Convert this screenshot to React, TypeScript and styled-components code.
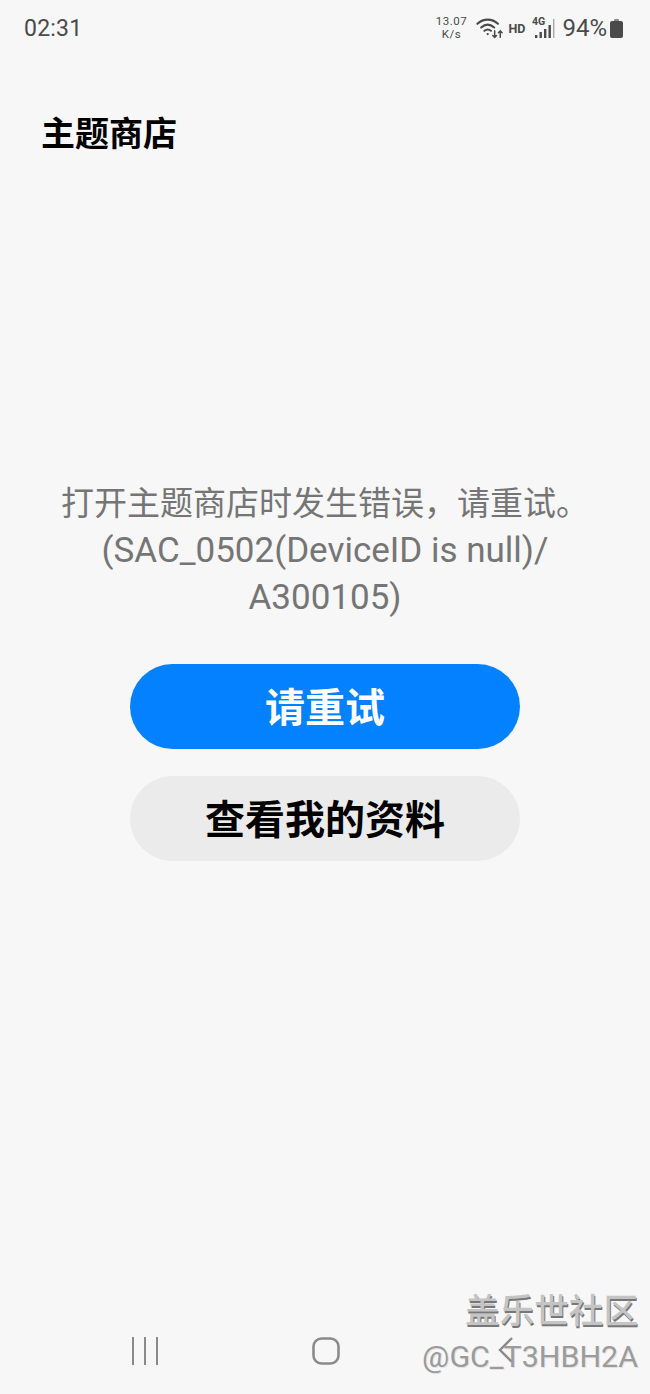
import React from 'react'
import styled, { createGlobalStyle } from 'styled-components'

const FONT = `Roboto, "Noto Sans CJK SC", sans-serif`

const GlobalStyle = createGlobalStyle`
	html, body {
		margin: 0;
		padding: 0;
		background: #f7f7f7;
	}
	body {
		font-family: ${FONT};
	}
`

const Screen = styled.div`
	position: relative;
	width: 650px;
	height: 1394px;
	background: #f7f7f7;
	display: flex;
	flex-direction: column;
	overflow: hidden;
`

const StatusBar = styled.div`
	display: flex;
	align-items: center;
	justify-content: space-between;
	height: 28px;
	margin-top: 14px;
	padding: 0 27px 0 24px;
	color: #4a4a4a;
`

const Clock = styled.span`
	font-size: 23px;
	letter-spacing: 0.2px;
`

const StatusIcons = styled.div`
	display: flex;
	align-items: center;
`

const Speed = styled.span`
	display: flex;
	flex-direction: column;
	align-items: center;
	font-size: 11.5px;
	line-height: 13.5px;
	letter-spacing: 0.5px;
	width: 34px;
	margin-right: 8px;
`

const Hd = styled.span`
	font-size: 12.5px;
	font-weight: 700;
	margin: 0 7px 0 4px;
`

const Battery = styled.span`
	font-size: 24px;
	margin: 0 3px 0 7px;
`

const Title = styled.h1`
	margin: 0;
	padding: 69px 0 0 41px;
	font-size: 34px;
	line-height: 46px;
	font-weight: 700;
	color: #000;
`

const Body = styled.div`
	display: flex;
	flex-direction: column;
	align-items: center;
	padding-top: 323px;
`

const Message = styled.p`
	margin: 0;
	width: 530px;
	font-size: 35px;
	line-height: 47px;
	text-align: center;
	color: #757575;
`

const MessageLead = styled.span`
	display: block;
	font-size: 33px;
`

const Actions = styled.div`
	display: flex;
	flex-direction: column;
	gap: 27px;
	margin-top: 43px;
`

const Button = styled.button<{ $primary?: boolean }>`
	width: 390px;
	height: 85px;
	padding: 0 0 4px;
	border: none;
	border-radius: 43px;
	font-family: ${FONT};
	font-size: 40px;
	font-weight: 700;
	letter-spacing: 0;
	color: ${(p) => (p.$primary ? '#fff' : '#000')};
	background: ${(p) => (p.$primary ? '#0381fe' : '#ebebeb')};
`

const NavBar = styled.div`
	position: absolute;
	left: 0;
	right: 0;
	bottom: 28px;
	display: flex;
	align-items: center;
	padding-left: 54px;
	height: 30px;
`

const NavSlot = styled.div`
	width: 181px;
	display: flex;
	justify-content: center;
	color: #8a8a8a;
`

// Community stamp sitting over the bottom right corner
const Stamp = styled.div`
	position: absolute;
	right: 12px;
	bottom: 20px;
	display: flex;
	flex-direction: column;
	align-items: flex-end;
	gap: 9px;
`

const StampName = styled.span`
	font-size: 34.6px;
	line-height: 40px;
	font-weight: 500;
	color: #c4c4c4;
	text-shadow: 1px 2px 0 #777;
`

const StampUser = styled.span`
	font-size: 30.4px;
	line-height: 34px;
	color: #9b9b9b;
	text-shadow: 1px 1px 0 #e2e2e2;
`

function WifiIcon() {
	return (
		<svg width="28" height="24" viewBox="0 0 30 24" fill="none" stroke="#4a4a4a" strokeWidth="2.2" strokeLinecap="round">
			<path d="M1.5 7.5C8 1.5 17 1.5 23.5 7.5" />
			<path d="M5.5 11.5C10 7.5 15 7.5 19.5 11.5" />
			<path d="M9 15C11.5 13 13.5 13 16 15" />
			<circle cx="12.5" cy="18.5" r="1.2" fill="#4a4a4a" stroke="none" />
			<path d="M20 15v7M18 20l2 2 2-2" strokeWidth="1.6" />
			<path d="M26 22v-7M24 17l2-2 2 2" strokeWidth="1.6" />
		</svg>
	)
}

function SignalIcon() {
	return (
		<svg width="23" height="24" viewBox="0 0 23 24">
			<text x="0" y="9" fontSize="10.5" fontWeight="700" fontFamily="Roboto, sans-serif" fill="#4a4a4a">4G</text>
			<rect x="3" y="19" width="2.4" height="3" fill="#4a4a4a" />
			<rect x="7.5" y="16" width="2.4" height="6" fill="#4a4a4a" />
			<rect x="12" y="13" width="2.4" height="9" fill="#4a4a4a" />
			<rect x="16.5" y="9" width="2.4" height="13" fill="#4a4a4a" />
			<rect x="21" y="3" width="1.4" height="19" fill="#a8a8a8" />
		</svg>
	)
}

function BatteryIcon() {
	return (
		<svg width="13" height="19" viewBox="0 0 13 19" fill="#4a4a4a">
			<rect x="4" y="0" width="5" height="2.5" rx="0.8" fill="#8a8a8a" />
			<rect x="0" y="2" width="13" height="17" rx="2" />
		</svg>
	)
}

export default function App() {
	return (
		<Screen>
			<GlobalStyle />
			<StatusBar>
				<Clock>02:31</Clock>
				<StatusIcons>
					<Speed>
						<span>13.07</span>
						<span>K/s</span>
					</Speed>
					<WifiIcon />
					<Hd>HD</Hd>
					<SignalIcon />
					<Battery>94%</Battery>
					<BatteryIcon />
				</StatusIcons>
			</StatusBar>
			<Title>主题商店</Title>
			<Body>
				<Message>
					<MessageLead>打开主题商店时发生错误，请重试。</MessageLead>
					(SAC_0502(DeviceID is null)/ A300105)
				</Message>
				<Actions>
					<Button $primary>请重试</Button>
					<Button>查看我的资料</Button>
				</Actions>
			</Body>
			<NavBar>
				<NavSlot>
					<svg width="28" height="28" viewBox="0 0 28 28" stroke="currentColor" strokeWidth="2">
						<path d="M2 0v28M14 0v28M26 0v28" />
					</svg>
				</NavSlot>
				<NavSlot>
					<svg width="28" height="28" viewBox="0 0 28 28" fill="none" stroke="currentColor" strokeWidth="2.6">
						<rect x="1.5" y="1.5" width="25" height="25" rx="8" />
					</svg>
				</NavSlot>
				<NavSlot>
					<svg width="20" height="30" viewBox="0 0 20 30" fill="none" stroke="currentColor" strokeWidth="2.4">
						<path d="M15 2L3 14l12 12" />
					</svg>
				</NavSlot>
			</NavBar>
			<Stamp>
				<StampName>盖乐世社区</StampName>
				<StampUser>@GC_T3HBH2A</StampUser>
			</Stamp>
		</Screen>
	)
}
